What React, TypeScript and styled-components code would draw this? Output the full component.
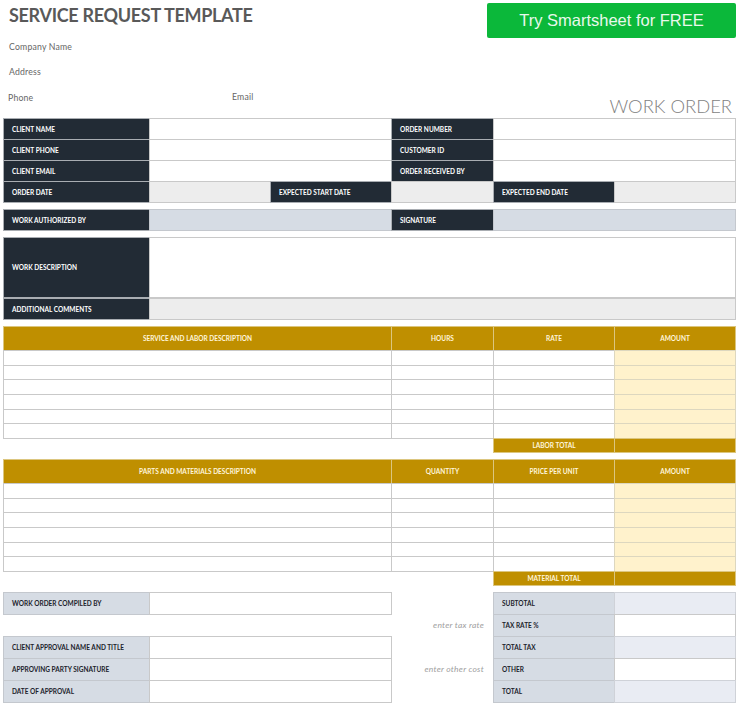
import styled, { createGlobalStyle } from "styled-components";

const GlobalStyle = createGlobalStyle`
  html, body {
    margin: 0;
    background: #ffffff;
  }
`;

const tones = {
  white: { bg: "#ffffff", fg: "#222b35", line: "#c9c9c9" },
  dark: { bg: "#222b35", fg: "#ffffff", line: "#a9adb2" },
  grey: { bg: "#ededed", fg: "#222b35", line: "#c9c9c9" },
  slate: { bg: "#d6dce4", fg: "#1c232c", line: "#c4c8ce" },
  pale: { bg: "#e9ecf3", fg: "#222b35", line: "#cfd2d8" },
  gold: { bg: "#bf8f00", fg: "#fff6dc", line: "#dcc67f" },
  cream: { bg: "#fff2cc", fg: "#222b35", line: "#ddd7bf" },
};

type Tone = keyof typeof tones;

const Page = styled.div`
  width: 739px;
  height: 704px;
  overflow: hidden;
  padding: 0 0 0 3px;
  box-sizing: border-box;
  font-family: "Lato", "Liberation Sans", sans-serif;
`;

const Header = styled.header`
  height: 118px;
  display: flex;
  justify-content: space-between;
`;

const Letterhead = styled.div`
  display: flex;
  flex-direction: column;
  padding-left: 6px;
`;

const Title = styled.h1`
  margin: 4px 0 0;
  font-size: 18px;
  line-height: 23px;
  font-weight: 700;
  letter-spacing: -0.3px;
  color: #595959;
`;

const InfoLine = styled.div`
  margin-top: ${(p) => p.$top}px;
  height: 12px;
  display: flex;
  font-size: 8.7px;
  line-height: 12px;
  letter-spacing: 0.2px;
  color: #666666;
`;

const InfoItem = styled.span`
  width: ${(p) => p.$width || 224}px;
  margin-left: ${(p) => p.$shift || 0}px;
  position: relative;
  top: ${(p) => p.$lift || 0}px;
`;

const HeaderRight = styled.div`
  width: 249px;
  margin-right: 3px;
  padding-top: 3px;
  display: flex;
  flex-direction: column;
  align-items: flex-end;
`;

const TryButton = styled.a`
  width: 249px;
  height: 35px;
  box-sizing: border-box;
  display: flex;
  align-items: center;
  justify-content: center;
  border-radius: 2px;
  background: #0bb83a;
  color: #e9f8ec;
  font-family: "Liberation Sans", Arial, sans-serif;
  font-size: 16.5px;
`;

const DocLabel = styled.div`
  margin-top: 57px;
  margin-right: 4px;
  font-size: 18.4px;
  line-height: 23px;
  font-weight: 300;
  color: #7f7f7f;
`;

const Sheet = styled.main`
  display: flex;
  flex-direction: column;
  gap: 7px;
`;

const Block = styled.section`
  display: grid;
  grid-template-columns: 146px 121px 121px 102px 121px 121px;
  grid-template-rows: ${(p) => p.$rows};
`;

const Cell = styled.div`
  grid-column: span ${(p) => p.$span || 1};
  box-sizing: border-box;
  margin: 0 -1px -1px 0;
  min-width: 0;
  display: flex;
  align-items: center;
  justify-content: ${(p) => (p.$center ? "center" : "flex-start")};
  padding: 0 ${(p) => (p.$center ? 0 : 8)}px;
  border: 1px solid ${(p) => tones[p.$tone as Tone].line};
  border-top-width: ${(p) => (p.$heavy ? 2 : 1)}px;
  background: ${(p) => tones[p.$tone as Tone].bg};
  color: ${(p) => tones[p.$tone as Tone].fg};
  font-size: 6.5px;
  font-weight: 700;
  white-space: nowrap;
`;

const Blank = styled.div`
  grid-column: span ${(p) => p.$span || 1};
`;

const Hint = styled.div`
  grid-column: span ${(p) => p.$span || 1};
  display: flex;
  align-items: center;
  justify-content: flex-end;
  padding-right: 9px;
  font-size: 8.5px;
  font-style: italic;
  letter-spacing: 0.25px;
  color: #a0a0a0;
`;

const LineRow = () => (
  <>
    <Cell $tone="white" $span={3} />
    <Cell $tone="white" />
    <Cell $tone="white" />
    <Cell $tone="cream" />
  </>
);

const LineTable = ({ columns, total }: { columns: string[]; total: string }) => (
  <Block $rows="24px repeat(6, 14.67px) 14px">
    <Cell $tone="gold" $span={3} $center>{columns[0]}</Cell>
    <Cell $tone="gold" $center>{columns[1]}</Cell>
    <Cell $tone="gold" $center>{columns[2]}</Cell>
    <Cell $tone="gold" $center>{columns[3]}</Cell>
    {[0, 1, 2, 3, 4, 5].map((i) => (
      <LineRow key={i} />
    ))}
    <Blank $span={4} />
    <Cell $tone="gold" $center>{total}</Cell>
    <Cell $tone="gold" />
  </Block>
);

export default function App() {
  return (
    <>
      <GlobalStyle />
      <Page>
        <Header>
          <Letterhead>
            <Title>SERVICE REQUEST TEMPLATE</Title>
            <InfoLine $top={14}><InfoItem>Company Name</InfoItem></InfoLine>
            <InfoLine $top={13}><InfoItem>Address</InfoItem></InfoLine>
            <InfoLine $top={14}>
              <InfoItem $shift={-1}>Phone</InfoItem>
              <InfoItem $lift={-1}>Email</InfoItem>
            </InfoLine>
          </Letterhead>
          <HeaderRight>
            <TryButton>Try Smartsheet for FREE</TryButton>
            <DocLabel>WORK ORDER</DocLabel>
          </HeaderRight>
        </Header>
        <Sheet>
          <Block $rows="repeat(4, 21px)">
            <Cell $tone="dark">CLIENT NAME</Cell>
            <Cell $tone="white" $span={2} />
            <Cell $tone="dark">ORDER NUMBER</Cell>
            <Cell $tone="white" $span={2} />
            <Cell $tone="dark">CLIENT PHONE</Cell>
            <Cell $tone="white" $span={2} />
            <Cell $tone="dark">CUSTOMER ID</Cell>
            <Cell $tone="white" $span={2} />
            <Cell $tone="dark">CLIENT EMAIL</Cell>
            <Cell $tone="white" $span={2} />
            <Cell $tone="dark">ORDER RECEIVED BY</Cell>
            <Cell $tone="white" $span={2} />
            <Cell $tone="dark">ORDER DATE</Cell>
            <Cell $tone="grey" />
            <Cell $tone="dark">EXPECTED START DATE</Cell>
            <Cell $tone="grey" />
            <Cell $tone="dark">EXPECTED END DATE</Cell>
            <Cell $tone="grey" />
          </Block>
          <Block $rows="21px">
            <Cell $tone="dark">WORK AUTHORIZED BY</Cell>
            <Cell $tone="slate" $span={2} />
            <Cell $tone="dark">SIGNATURE</Cell>
            <Cell $tone="slate" $span={2} />
          </Block>
          <Block $rows="60px 22px">
            <Cell $tone="dark">WORK DESCRIPTION</Cell>
            <Cell $tone="white" $span={5} />
            <Cell $tone="dark" $heavy>ADDITIONAL COMMENTS</Cell>
            <Cell $tone="grey" $span={5} $heavy />
          </Block>
          <LineTable
            columns={["SERVICE AND LABOR DESCRIPTION", "HOURS", "RATE", "AMOUNT"]}
            total="LABOR TOTAL"
          />
          <LineTable
            columns={["PARTS AND MATERIALS DESCRIPTION", "QUANTITY", "PRICE PER UNIT", "AMOUNT"]}
            total="MATERIAL TOTAL"
          />
          <Block $rows="repeat(5, 22px)">
            <Cell $tone="slate">WORK ORDER COMPILED BY</Cell>
            <Cell $tone="white" $span={2} />
            <Blank />
            <Cell $tone="slate">SUBTOTAL</Cell>
            <Cell $tone="pale" />

            <Hint $span={4}>enter tax rate</Hint>
            <Cell $tone="slate">TAX RATE %</Cell>
            <Cell $tone="white" />

            <Cell $tone="slate">CLIENT APPROVAL NAME AND TITLE</Cell>
            <Cell $tone="white" $span={2} />
            <Blank />
            <Cell $tone="slate">TOTAL TAX</Cell>
            <Cell $tone="pale" />

            <Cell $tone="slate">APPROVING PARTY SIGNATURE</Cell>
            <Cell $tone="white" $span={2} />
            <Hint>enter other cost</Hint>
            <Cell $tone="slate">OTHER</Cell>
            <Cell $tone="white" />

            <Cell $tone="slate">DATE OF APPROVAL</Cell>
            <Cell $tone="white" $span={2} />
            <Blank />
            <Cell $tone="slate">TOTAL</Cell>
            <Cell $tone="pale" />
          </Block>
        </Sheet>
      </Page>
    </>
  );
}
